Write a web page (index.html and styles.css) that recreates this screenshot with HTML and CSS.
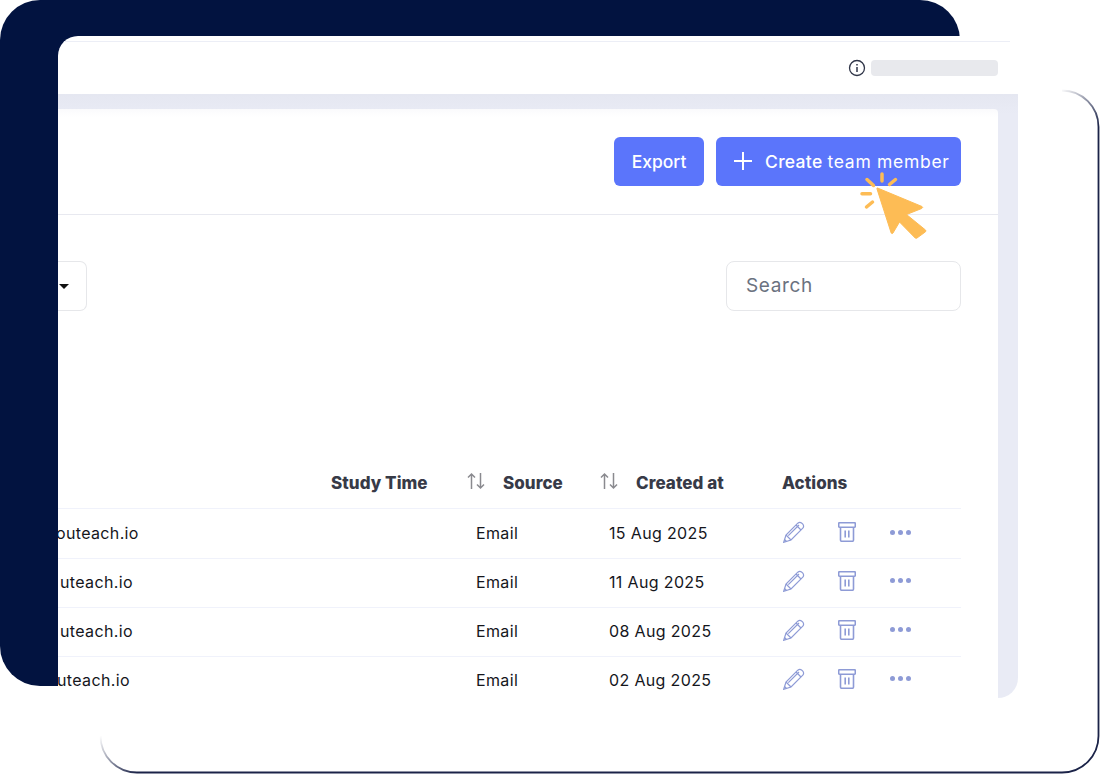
FILE: index.html
```html
<!DOCTYPE html>
<html lang="en">
<head>
    <meta charset="UTF-8">
    <meta name="viewport" content="width=device-width, initial-scale=1.0">
    <title>Team members</title>
    <link rel="stylesheet" href="styles.css">
</head>
<body>
    <!-- Icons used more than once -->
    <svg class="icon-defs" width="0" height="0">
        <symbol id="icon-sort" viewBox="0 0 18 18">
            <path d="M4.5 17V2M1 5.5 4.5 2 8 5.5M13.5 1v15M10 12.5l3.5 3.5 3.5-3.5" fill="none" stroke="#8a8a8f" stroke-width="1.5"/>
        </symbol>
        <symbol id="icon-pencil" viewBox="0 0 22 22">
            <path d="M.7 21.3 3 14 14.8 2.2q2-1.6 4 0l1 1q1.6 2 0 4L8 19Z" fill="none" stroke="#8e9bd6" stroke-width="1.2"/>
            <path d="M3 14l5 5M5.3 14.7 16 4M13 4l5 5M1.5 18.5l2 2" fill="none" stroke="#8e9bd6" stroke-width="1.2"/>
        </symbol>
        <symbol id="icon-trash" viewBox="0 0 18 20">
            <rect x=".7" y=".7" width="16.6" height="4.6" rx="1" fill="none" stroke="#8e9bd6" stroke-width="1.6"/>
            <path d="M2.5 5.3V18q0 1.3 1.3 1.3h10.400q1.3 0 1.3-1.3V5.3M7.2 8.5v7M10.800 8.5v7" fill="none" stroke="#8e9bd6" stroke-width="1.6"/>
        </symbol>
    </svg>

    <div class="stage">
        <!-- Outline card behind everything, fades out at both ends -->
        <svg class="back-frame" width="1100" height="774" viewBox="0 0 1100 774" fill="none">
            <defs>
                <linearGradient id="fade-top" gradientUnits="userSpaceOnUse" x1="1060" y1="90" x2="1098" y2="128">
                    <stop offset="0" stop-color="#1b2348" stop-opacity="0"/>
                    <stop offset="1" stop-color="#1b2348"/>
                </linearGradient>
                <linearGradient id="fade-bottom" gradientUnits="userSpaceOnUse" x1="101" y1="735" x2="138" y2="772">
                    <stop offset="0" stop-color="#1b2348" stop-opacity="0"/>
                    <stop offset="1" stop-color="#1b2348"/>
                </linearGradient>
            </defs>
            <path d="M1062 90.5A36.5 36.5 0 0 1 1098.5 127" stroke="url(#fade-top)" stroke-width="1.8"/>
            <path d="M1098.5 127V736A36.5 36.5 0 0 1 1062 772.5H137" stroke="#1b2348" stroke-width="1.8"/>
            <path d="M137 772.5A36.5 36.5 0 0 1 100.5 736" stroke="url(#fade-bottom)" stroke-width="1.8"/>
        </svg>

        <div class="navy-block"></div>

        <div class="window">
            <div class="topbar">
                <svg class="info-icon" width="18" height="18" viewBox="0 0 18 18" fill="none" stroke="#2f3548">
                    <circle cx="9" cy="9" r="7.5" stroke-width="1.3"/>
                    <path d="M9 8v5M9 5v1.4" stroke-width="1.5"/>
                </svg>
                <div class="skeleton"></div>
            </div>

            <div class="content">
                <div class="panel">
                    <div class="panel-head">
                        <button class="btn">Export</button>
                        <button class="btn btn-create">
                            <svg width="18" height="18" viewBox="0 0 18 18" stroke="#fff" stroke-width="2"><path d="M9 0v18M0 9h18"/></svg>
                            <span class="btn-strong">Create</span>
                            <span class="btn-light">team member</span>
                        </button>
                    </div>

                    <div class="filters">
                        <div class="select"><span class="caret"></span></div>
                        <div class="search"><span class="search-text">Search</span></div>
                    </div>

                    <div class="table">
                        <div class="row head">
                            <div></div>
                            <div>Study Time</div>
                            <div class="sortable">
                                <svg class="sort-icon" width="18" height="18"><use href="#icon-sort"/></svg>
                                Source
                            </div>
                            <div class="sortable">
                                <svg class="sort-icon" width="18" height="18"><use href="#icon-sort"/></svg>
                                Created at
                            </div>
                            <div>Actions</div>
                        </div>

                        <div class="row row-first">
                            <div class="mail mail-1">outeach.io</div>
                            <div class="cell">Email</div>
                            <div class="cell">15 Aug 2025</div>
                            <div class="actions">
                                <svg width="22" height="22"><use href="#icon-pencil"/></svg>
                                <svg class="trash" width="18" height="20"><use href="#icon-trash"/></svg>
                                <div class="dots"><span></span><span></span><span></span></div>
                            </div>
                        </div>

                        <div class="row">
                            <div class="mail mail-2">uteach.io</div>
                            <div class="cell">Email</div>
                            <div class="cell">11 Aug 2025</div>
                            <div class="actions">
                                <svg width="22" height="22"><use href="#icon-pencil"/></svg>
                                <svg class="trash" width="18" height="20"><use href="#icon-trash"/></svg>
                                <div class="dots"><span></span><span></span><span></span></div>
                            </div>
                        </div>

                        <div class="row">
                            <div class="mail mail-2">uteach.io</div>
                            <div class="cell">Email</div>
                            <div class="cell">08 Aug 2025</div>
                            <div class="actions">
                                <svg width="22" height="22"><use href="#icon-pencil"/></svg>
                                <svg class="trash" width="18" height="20"><use href="#icon-trash"/></svg>
                                <div class="dots"><span></span><span></span><span></span></div>
                            </div>
                        </div>

                        <div class="row">
                            <div class="mail mail-4">uteach.io</div>
                            <div class="cell">Email</div>
                            <div class="cell">02 Aug 2025</div>
                            <div class="actions">
                                <svg width="22" height="22"><use href="#icon-pencil"/></svg>
                                <svg class="trash" width="18" height="20"><use href="#icon-trash"/></svg>
                                <div class="dots"><span></span><span></span><span></span></div>
                            </div>
                        </div>
                    </div>
                </div>
            </div>
        </div>

        <!-- Cursor lies over the button -->
        <svg class="cursor" width="70" height="70" viewBox="858 170 70 70" fill="none">
            <path d="M877.5 188 922 206.5q1.5 1-.3 2L906.5 214.5 925.5 230q.8 1 0 1.8L917 238q-1 .6-1.8 0L899.5 222 893 233q-1 1.2-1.8 0L877 189q-.3-1.3.5-1Z" fill="#fdbc55" stroke="#fdbc55" stroke-linejoin="round"/>
            <path d="M867 179.5 873.5 185.5M882 174V181M889.5 184.5 895.5 179.5M862 193.7H870.5M866.5 207 872.5 202" stroke="#fdbc55" stroke-width="3.5" stroke-linecap="round"/>
        </svg>
    </div>
</body>
</html>
```

FILE: styles.css
```css
* {
    box-sizing: border-box;
}

body {
    margin: 0;
    background-color: #FFFFFF;
    font-family: "Inter", "Open Sans", sans-serif;
    color: #15161c;
}

.icon-defs {
    position: absolute;
}

.stage {
    position: relative;
    width: 1100px;
    height: 774px;
    overflow: hidden;
}

.back-frame {
    position: absolute;
    left: 0;
    top: 0;
}

.navy-block {
    position: absolute;
    left: 0;
    top: 0;
    width: 960px;
    height: 686px;
    background-color: #021340;
    border-radius: 40px;
}

.window {
    position: absolute;
    left: 58px;
    top: 36px;
    width: 960px;
    height: 662px;
    display: flex;
    flex-direction: column;
    overflow: hidden;
    background-color: #FFFFFF;
    border-radius: 20px 0 20px 0;
}

.topbar {
    height: 53px;
    margin-top: 5px;
    margin-right: 8px;
    padding-right: 12px;
    display: flex;
    justify-content: flex-end;
    align-items: center;
    gap: 5px;
    border-top: 1px solid #eceef6;
}

.skeleton {
    width: 127px;
    height: 16px;
    background-color: #e8e9ed;
    border-radius: 4px;
}

.content {
    flex: 1;
    padding: 15px 20px 0 0;
    background: linear-gradient(#e5e7f1, #e9ebf5 20px);
    min-height: 0;
}

.panel {
    height: 100%;
    background: linear-gradient(#fafafc, #FFFFFF 8px);
    border-top-right-radius: 4px;
    overflow: hidden;
}

.panel-head {
    height: 106px;
    padding: 28px 37px 0 0;
    display: flex;
    justify-content: flex-end;
    gap: 12px;
    border-bottom: 1px solid #e8e9f0;
}

.btn {
    height: 49px;
    width: 90px;
    border: none;
    border-radius: 6px;
    background-color: #5b75fb;
    color: #FFFFFF;
    font-family: inherit;
    font-size: 17.5px;
    font-weight: 500;
}

.btn-create {
    width: 245px;
    padding-left: 18px;
    padding-bottom: 2px;
    display: flex;
    align-items: center;
}

.btn-strong {
    margin-left: 13px;
    letter-spacing: 0.3px;
}

.btn-light {
    margin-left: 5px;
    font-weight: 400;
    letter-spacing: 0.7px;
}

.filters {
    padding: 46px 37px 0 0;
    display: flex;
    justify-content: space-between;
}

.select {
    width: 29px;
    height: 50px;
    padding-left: 1px;
    display: flex;
    align-items: center;
    border: 1.5px solid #e6e7ea;
    border-left: none;
    border-radius: 0 7px 7px 0;
}

.caret {
    width: 0;
    height: 0;
    border-left: 5px solid transparent;
    border-right: 5px solid transparent;
    border-top: 5px solid #111111;
}

.search {
    width: 235px;
    height: 50px;
    padding-left: 19px;
    padding-bottom: 2px;
    display: flex;
    align-items: center;
    border: 1.5px solid #e6e7ea;
    border-radius: 8px;
    color: #6b7280;
    font-size: 19px;
    letter-spacing: 0.65px;
}

.table {
    margin-top: 149px;
    margin-right: 37px;
}

.row {
    display: grid;
    grid-template-columns: 273px 136px 133px 182px 179px;
    align-items: center;
    height: 49px;
    padding-bottom: 3px;
    border-bottom: 1px solid #f0f2fb;
    font-size: 16px;
    letter-spacing: 0.35px;
}

.row.head {
    padding-bottom: 2px;
    color: #373a47;
    font-size: 17px;
    font-weight: 800;
    letter-spacing: 0.05px;
}

.row-first {
    height: 50px;
    padding-bottom: 1px;
}

.sortable {
    display: flex;
    align-items: center;
    gap: 18px;
}

.sort-icon {
    margin-top: -4px;
}

.mail {
    grid-column: span 2;
}

.mail-1 {
    margin-left: -2px;
}

.mail-2 {
    margin-left: 2px;
}

.mail-4 {
    margin-left: -1px;
}

.cell {
    padding-left: 9px;
}

.actions {
    display: flex;
    align-items: center;
    margin-bottom: 2px;
    padding-left: 1px;
}

.trash {
    margin-left: 33px;
}

.dots {
    margin-left: 34px;
    display: flex;
    gap: 3px;
}

.dots span {
    width: 5px;
    height: 5px;
    border-radius: 50%;
    background-color: #8e9bd6;
}

.cursor {
    position: absolute;
    left: 858px;
    top: 170px;
}
```
